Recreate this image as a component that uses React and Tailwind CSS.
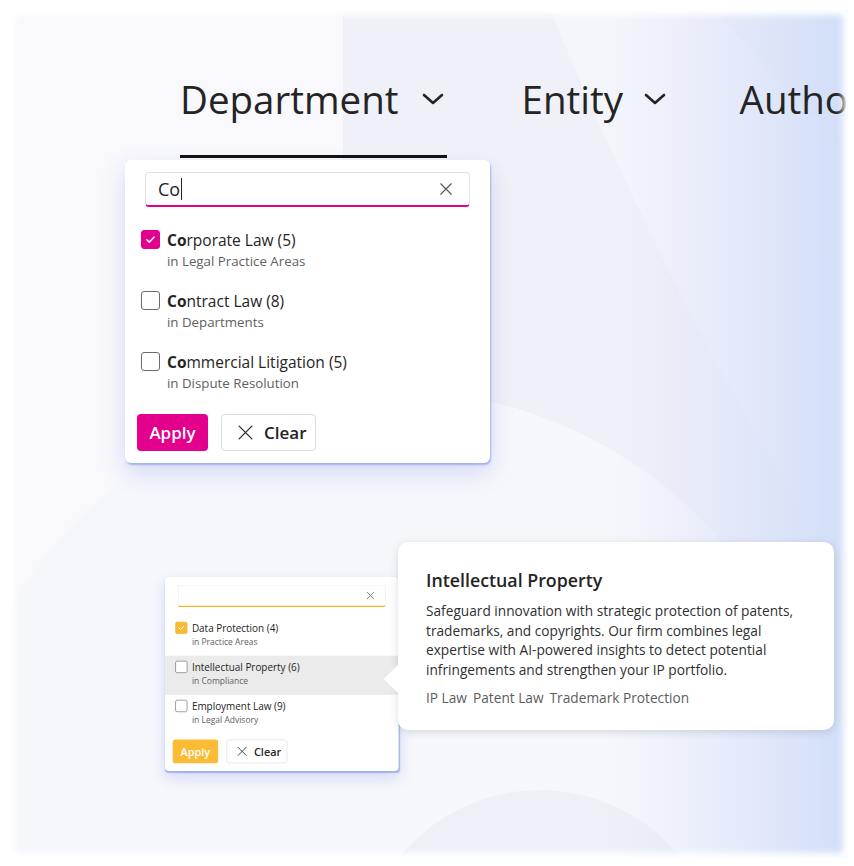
import React from 'react';

const PINK = {
  underline: 'border-b-[#e3008c]',
  box: 'bg-[#e3008c] border-[#e3008c]',
  apply: 'bg-[#e3008c]',
};

const AMBER = {
  underline: 'border-b-[#f7b52c]',
  box: 'bg-[#f9b934] border-[#f9b934]',
  apply: 'bg-[#fbbb35]',
};

const BIG_ITEMS = [
  { pre: 'Co', rest: 'rporate Law (5)', sub: 'in Legal Practice Areas', checked: true },
  { pre: 'Co', rest: 'ntract Law (8)', sub: 'in Departments' },
  { pre: 'Co', rest: 'mmercial Litigation (5)', sub: 'in Dispute Resolution' },
];

const SMALL_ITEMS = [
  { pre: '', rest: 'Data Protection (4)', sub: 'in Practice Areas', checked: true },
  { pre: '', rest: 'Intellectual Property (6)', sub: 'in Compliance' },
  { pre: '', rest: 'Employment Law (9)', sub: 'in Legal Advisory' },
];

function XIcon({ className = '' }) {
  return (
    <svg viewBox="0 0 16 16" className={className} fill="none" stroke="currentColor" strokeWidth="1.3" strokeLinecap="round">
      <path d="M2 2l12 12M14 2L2 14" />
    </svg>
  );
}

function Chevron({ className = '' }) {
  return (
    <svg viewBox="0 0 24 16" className={className} fill="none" stroke="currentColor" strokeWidth="2.6" strokeLinecap="round" strokeLinejoin="round">
      <path d="M3 4l9 8 9-8" />
    </svg>
  );
}

// shared filter popover; the small one is this same card scaled down
function FilterDropdown({ theme, query, items, highlight = -1 }) {
  return (
    <div className="w-[365px] h-[303px] bg-white rounded-[6px] pt-[12px] flex flex-col shadow-[1px_2px_2px_rgba(110,135,225,0.55),0_10px_24px_rgba(95,115,215,0.22)]">
      {/* Search box */}
      <div className={`mx-[20px] h-[35px] flex items-center rounded-[4px] border border-[#e3e3e3] border-b-2 pl-[12px] pr-[16px] ${theme.underline}`}>
        <span className="text-[18px] text-[#242424] leading-none">{query}</span>
        {query && <span className="ml-[1px] w-[1px] h-[22px] bg-[#242424]" />}
        <XIcon className="ml-auto w-[14px] h-[14px] text-[#555]" />
      </div>

      {/* Options */}
      <div className="mt-[15px] flex flex-col">
        {items.map((it, i) => (
          <div
            key={it.rest}
            className={`h-[61px] flex items-start gap-[7px] pl-[16px] pt-[8px] ${i === highlight ? 'bg-[#ebebeb]' : ''}`}
          >
            <div
              className={`w-[19px] h-[19px] shrink-0 rounded-[3px] border-[1.5px] flex items-center justify-center ${
                it.checked ? theme.box : 'border-[#6b6b6b] bg-white'
              }`}
            >
              {it.checked && (
                <svg viewBox="0 0 16 16" className="w-[13px] h-[13px]" fill="none" stroke="white" strokeWidth="1.9" strokeLinecap="round" strokeLinejoin="round">
                  <path d="M3.5 8.3l3 2.9 6-6.2" />
                </svg>
              )}
            </div>
            <div className="flex flex-col">
              <span className="text-[15.5px] leading-[21px] text-[#242424]">
                {it.pre && <b className="font-bold">{it.pre}</b>}
                {it.rest}
              </span>
              <span className="text-[13.3px] leading-[20px] text-[#616161]">{it.sub}</span>
            </div>
          </div>
        ))}
      </div>

      {/* Actions */}
      <div className="mt-[9px] px-[12px] flex gap-[13px]">
        <button className={`w-[71px] h-[37px] rounded-[4px] text-white text-[17px] font-semibold ${theme.apply}`}>
          Apply
        </button>
        <button className="w-[95px] h-[37px] rounded-[4px] border border-[#dcdcdc] bg-white flex items-center pl-[15px] gap-[10px] text-[17px] font-semibold text-[#242424]">
          <XIcon className="w-[17px] h-[17px] text-[#333]" />
          Clear
        </button>
      </div>
    </div>
  );
}

function Backdrop() {
  return (
    <svg className="absolute inset-0 w-full h-full" viewBox="0 0 838 848" preserveAspectRatio="none">
      <defs>
        <linearGradient id="edge" x1="0" x2="1" y1="0" y2="0">
          <stop offset="0" stopColor="#dbe3fb" stopOpacity="0" />
          <stop offset="1" stopColor="#d1ddf8" stopOpacity="1" />
        </linearGradient>
      </defs>
      <rect width="838" height="848" fill="#f8f8fd" />
      <rect x="333" width="505" height="848" fill="#f0f1f8" />
      <circle cx="380" cy="820" r="440" fill="#f6f7fc" />
      <path d="M540 0 Q700 380 838 560 L838 143 Q760 60 703 0 Z" fill="#f4f5fb" />
      <circle cx="530" cy="960" r="180" fill="#eef0f7" />
      <rect x="600" width="238" height="848" fill="url(#edge)" />
    </svg>
  );
}

export default function App() {
  return (
    <div className="relative w-[854px] h-[866px] bg-white overflow-hidden font-['Open_Sans','Noto_Sans',sans-serif] text-[#242424]">
      {/* Backdrop panel with tabs */}
      <div className="absolute left-[10px] top-[10px] right-[6px] bottom-[8px] rounded-[4px] overflow-hidden">
        <Backdrop />
        <div className="relative flex items-start pl-[170px] pt-[65px]">
          <div className="flex flex-col w-[269px]">
            <div className="flex items-center h-[48px]">
              <span className="w-[241px] text-[38.5px] leading-none">Department</span>
              <Chevron className="w-[24px] h-[16px] text-[#242424]" />
            </div>
            <div className="mt-[32px] h-[3px] bg-[#111]" />
          </div>
          <div className="ml-[75px] flex items-center h-[48px]">
            <span className="w-[121px] text-[38.5px] leading-none">Entity</span>
            <Chevron className="w-[24px] h-[16px] text-[#242424]" />
          </div>
          <div className="ml-[73px] flex items-center h-[48px]">
            <span className="text-[38.5px] leading-none whitespace-nowrap">Autho</span>
          </div>
        </div>
        <div className="absolute inset-0 pointer-events-none shadow-[inset_0_0_7px_5px_#ffffff]" />
      </div>

      {/* Large department filter */}
      <div className="absolute left-[125px] top-[160px]">
        <FilterDropdown theme={PINK} query="Co" items={BIG_ITEMS} />
      </div>

      {/* Small filter preview */}
      <div className="absolute left-[165px] top-[577px] scale-[0.64] origin-top-left">
        <FilterDropdown theme={AMBER} query="" items={SMALL_ITEMS} highlight={1} />
      </div>

      {/* Hover card */}
      <div className="absolute left-[398px] top-[542px] w-[436px] h-[188px] bg-white rounded-[10px] shadow-[0_2px_9px_rgba(0,0,0,0.13)] pl-[28px] pr-[20px] pt-[26px]">
        <div className="absolute -left-[10px] top-[127px] w-[20px] h-[20px] rotate-45 bg-white" />
        <h3 className="relative text-[17.8px] leading-[24px] font-semibold text-[#242424]">Intellectual Property</h3>
        <p className="relative mt-[9px] text-[13.7px] leading-[19.7px] text-[#303030] w-[376px]">
          Safeguard innovation with strategic protection of patents, trademarks, and copyrights. Our firm combines legal
          expertise with AI-powered insights to detect potential infringements and strengthen your IP portfolio.
        </p>
        <div className="relative mt-[8px] flex gap-[6px] text-[13.7px] leading-[20px] text-[#5c5c5c]">
          <span>IP Law</span>
          <span>Patent Law</span>
          <span>Trademark Protection</span>
        </div>
      </div>
    </div>
  );
}
